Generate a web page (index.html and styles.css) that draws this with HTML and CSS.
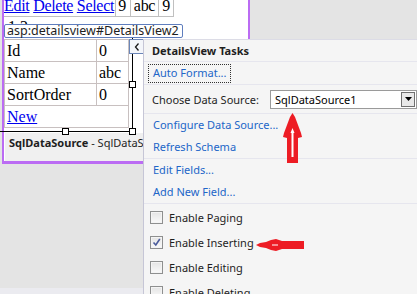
FILE: index.html
```html
<!DOCTYPE html>
<html>
<head>
<meta charset="utf-8">
<link rel="stylesheet" href="styles.css">
</head>
<body>
<div class="surface">
  <div class="designer">
    <table class="grid">
      <tr>
        <td><a href="#">Edit</a> <a href="#">Delete</a> <a href="#">Select</a></td>
        <td class="g-num">9</td>
        <td>abc</td>
        <td>9</td>
      </tr>
    </table>
    <div class="pager">1 2</div>
    <div class="details-area">
      <table class="details">
        <tr><td class="c1">Id</td><td class="c2">0</td></tr>
        <tr><td class="c1">Name</td><td class="c2">abc</td></tr>
        <tr><td class="c1">SortOrder</td><td class="c2">0</td></tr>
        <tr><td colspan="2"><a href="#">New</a></td></tr>
      </table>
    </div>
    <div class="sqlds"><b>SqlDataSource</b> - SqlDataSource1</div>
  </div>
  <div class="filler"></div>
  <div class="statusbar"></div>

  <div class="selection">
    <span class="handle h-rm"></span>
    <span class="handle h-bm"></span>
    <span class="handle h-br"></span>
  </div>
  <div class="tooltip">asp:detailsview#DetailsView2</div>
  <div class="smarttag"><svg width="6" height="8" viewBox="0 0 6 8"><path d="M4.5 0.5 L1.5 4 L4.5 7.5" fill="none" stroke="#1a1a1a" stroke-width="1.3"/></svg></div>

  <div class="tasks">
    <div class="t-head">DetailsView Tasks</div>
    <div class="t-row t-sep"><span class="t-link t-focus">Auto Format...</span></div>
    <div class="t-choose t-sep">
      <span class="t-label">Choose Data Source:</span>
      <div class="t-select">
        <span class="t-value">SqlDataSource1</span>
        <span class="t-btn"><svg width="7" height="4" viewBox="0 0 7 4"><path d="M0 0 H7 L3.5 4 Z" fill="#000"/></svg></span>
      </div>
    </div>
    <div class="t-group t-sep">
      <div class="t-row"><span class="t-link">Configure Data Source...</span></div>
      <div class="t-row"><span class="t-link">Refresh Schema</span></div>
    </div>
    <div class="t-group t-sep">
      <div class="t-row"><span class="t-link">Edit Fields...</span></div>
      <div class="t-row"><span class="t-link">Add New Field...</span></div>
    </div>
    <div class="t-checks">
      <div class="t-check"><span class="cb"></span><span>Enable Paging</span></div>
      <div class="t-check"><span class="cb"><svg width="9" height="9" viewBox="0 0 9 9"><path d="M1.5 4.5 L3.8 7 L7.8 1" fill="none" stroke="#4b5c9c" stroke-width="1.6"/></svg></span><span>Enable Inserting</span></div>
      <div class="t-check"><span class="cb"></span><span>Enable Editing</span></div>
      <div class="t-check"><span class="cb"></span><span>Enable Deleting</span></div>
    </div>
  </div>

  <svg class="arrow-up" width="20" height="52" viewBox="0 0 20 52">
    <path d="M9.5 0 L12 4 L18 20 L19 24 L15 25 L15 50 L4 50 L4 25 L0 24 L1 20 L7 4 Z" fill="#ed1c24"/>
    <path d="M9.5 15 L11.5 20 L10.5 20 L10.5 44 L8.5 44 L8.5 20 L7.5 20 Z" fill="#fff"/>
  </svg>
  <svg class="arrow-left" width="50" height="14" viewBox="0 0 50 14">
    <path d="M0 7 L4 5 L10 4 L15 2 L20 1 L26 3 L48 3 L48 11 L26 11 L20 13 L15 12 L10 10 L4 9 Z" fill="#ed1c24"/>
    <path d="M16 6.5 L22 6.5 L22 7.5 L16 7.5 Z" fill="#fff"/>
  </svg>
</div>
</body>
</html>
```

FILE: styles.css
```css
html, body {
  margin: 0;
  padding: 0;
}
body {
  width: 417px;
  height: 294px;
  overflow: hidden;
  background: #e4e4e4;
}
.surface {
  position: relative;
  width: 417px;
  height: 294px;
  display: flex;
  flex-direction: column;
  overflow: hidden;
}
.designer {
  margin-left: 2px;
  width: 244px;
  height: 161px;
  background: #ffffff;
  border-left: 2px solid #bb6cf3;
  border-right: 2px solid #bb6cf3;
  border-bottom: 3px solid #bb6cf3;
  display: flex;
  flex-direction: column;
  font-family: "Liberation Serif", "Times New Roman", serif;
  font-size: 16px;
  color: #000;
  flex: none;
}
.grid {
  align-self: flex-start;
  border-collapse: collapse;
  margin-top: -5px;
  line-height: 18px;
  letter-spacing: -0.3px;
}
.grid td {
  border: 1px solid #c0c0c0;
  padding: 1px 3px;
}
.grid td:first-child {
  padding-left: 0;
  padding-right: 1px;
  border-left: none;
}
.grid td.g-num {
  padding: 1px 4px 1px 2px;
}
.grid a, .details a {
  color: #0000ee;
}
.pager {
  height: 22px;
  line-height: 20px;
  padding-left: 4px;
}
.details-area {
  height: 94px;
}
.details {
  border-collapse: collapse;
  width: 125px;
  line-height: 19px;
}
.details td {
  border: 1px solid #c8c0c0;
  padding: 1px 2px;
  height: 19px;
}
.details .c1 { width: 87px; }
.sqlds {
  flex: 1;
  background: #f0f0f0;
  border-left: 1px solid #ffffff;
  font-family: "Noto Sans", "Open Sans", sans-serif;
  font-size: 11px;
  line-height: 18px;
  padding: 1px 0 0 4px;
  white-space: nowrap;
  overflow: hidden;
  color: #1e1e1e;
}
.filler {
  flex: 1;
}
.statusbar {
  height: 6px;
  background: #ebebf0;
  flex: none;
}

.selection {
  position: absolute;
  left: 0;
  top: 37px;
  width: 132px;
  height: 94px;
  border-right: 1px solid #000;
  border-bottom: 1px solid #000;
}
.handle {
  position: absolute;
  width: 5px;
  height: 5px;
  background: #fff;
  border: 1px solid #000;
}
.h-rm { right: -4px; top: 44px; }
.h-bm { left: 62px; bottom: -4px; }
.h-br { right: -4px; bottom: -4px; }

.tooltip {
  position: absolute;
  left: 4px;
  top: 24px;
  height: 12px;
  padding: 0 3px 0 2px;
  background: #ffffff;
  border: 1px solid #5f7ebe;
  border-radius: 2px;
  font-family: "Noto Sans", "Open Sans", sans-serif;
  font-size: 12.5px;
  line-height: 12px;
  color: #1e1e1e;
  white-space: nowrap;
}
.smarttag {
  position: absolute;
  left: 129px;
  top: 39px;
  width: 13px;
  height: 13px;
  background: #f4f6fa;
  border: 1px solid #6b86b8;
  display: flex;
  align-items: center;
  justify-content: center;
}

.tasks {
  position: absolute;
  left: 143px;
  top: 39px;
  right: 0;
  bottom: 0;
  background: #f5f5f5;
  border-left: 1px solid #c6c6d6;
  border-top: 1px solid #dcdce6;
  font-family: "Noto Sans", "Open Sans", sans-serif;
  font-size: 11px;
  color: #1e1e1e;
}
.t-head {
  height: 21px;
  line-height: 21px;
  padding-left: 8px;
  font-weight: bold;
  border-bottom: 1px solid #e6e6ee;
}
.t-sep {
  border-bottom: 1px solid #e6e6ee;
}
.t-row {
  height: 22px;
  display: flex;
  align-items: center;
  padding-left: 4px;
}
.t-link {
  color: #2266c8;
  padding: 0 3px 1px 4px;
  line-height: 16px;
  border: 1px solid transparent;
}
.t-focus {
  border: 1px dotted #333;
}
.t-choose {
  height: 28px;
  display: flex;
  align-items: center;
  padding-left: 8px;
}
.t-label {
  width: 118px;
  flex: none;
}
.t-select {
  flex: 1;
  height: 17px;
  background: #fff;
  border: 1px solid #9a9a9a;
  display: flex;
  align-items: center;
  justify-content: space-between;
}
.t-value {
  padding-left: 4px;
  color: #000;
}
.t-btn {
  width: 12px;
  height: 13px;
  margin-right: 1px;
  background: #e8e8e8;
  border: 1px solid #707070;
  display: flex;
  align-items: center;
  justify-content: center;
}
.t-checks {
  padding-top: 1px;
}
.t-check {
  height: 25px;
  display: flex;
  align-items: center;
  padding-left: 6px;
  gap: 6px;
}
.cb {
  width: 11px;
  height: 11px;
  border: 1px solid #8e8f8f;
  background: linear-gradient(#e4e4e4, #fafafa);
  box-shadow: inset 0 0 0 1px #f4f4f4;
  display: flex;
  align-items: center;
  justify-content: center;
}

.arrow-up {
  position: absolute;
  left: 283px;
  top: 113px;
}
.arrow-left {
  position: absolute;
  left: 256px;
  top: 238px;
}
```
